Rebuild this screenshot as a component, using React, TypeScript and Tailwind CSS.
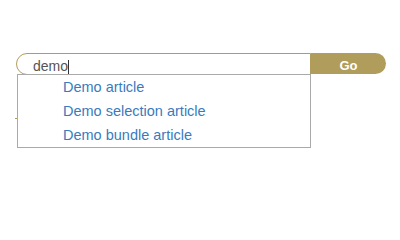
import React from "react";

export default function App() {
  return (
    <div className="relative w-[400px] h-[200px] bg-white font-['Liberation_Sans',Arial,sans-serif]">
      <div className="flex pl-[16px] pt-[53px]">
        <div className="w-[295px] h-[22px] border border-[#b19d5b] rounded-l-[11px] pl-[16px] pt-[4px] leading-[16px] text-[14px] text-[#555555] flex items-start">
          <span>demo</span>
          <span className="inline-block w-px h-[14px] bg-[#333333] mt-[2px]" />
        </div>
        <div className="w-[75px] h-[21px] bg-[#b19d5b] rounded-r-full text-white font-bold text-[13px] leading-[16px] pt-[5px] text-center">
          Go
        </div>
      </div>
      <div className="absolute left-[15px] top-[118px] w-[2px] h-px bg-[#b19d5b]" />
      <div className="absolute left-[17px] top-[74px] w-[294px] h-[74px] border border-[#aaaaaa] bg-white pl-[45px] text-[14.5px] leading-[24px] text-[#3a7bbd]">
        <div>Demo article</div>
        <div>Demo selection article</div>
        <div>Demo bundle article</div>
      </div>
    </div>
  );
}
